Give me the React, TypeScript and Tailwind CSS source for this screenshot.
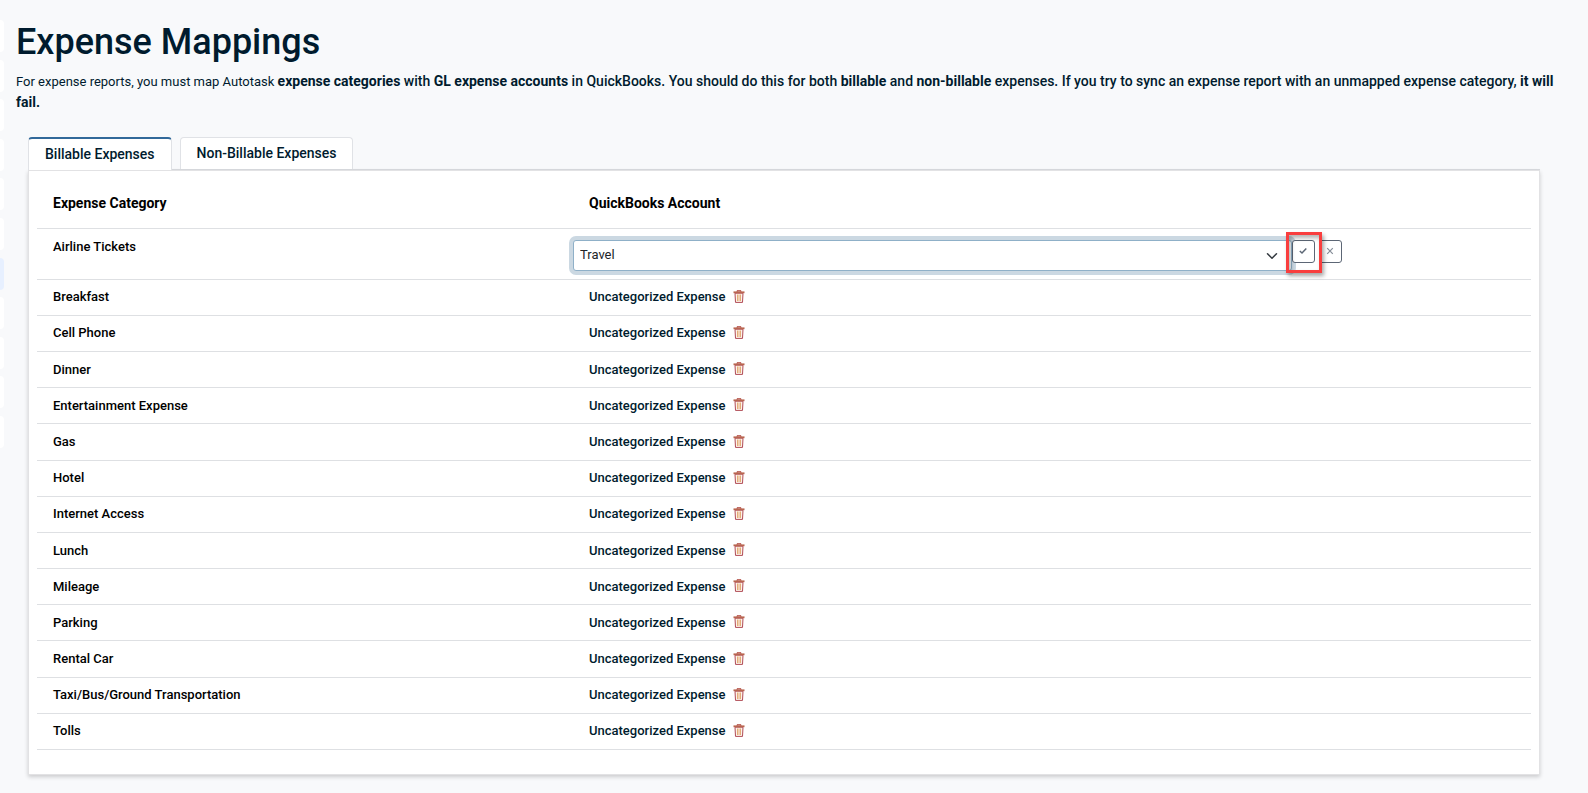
import { useState } from "react";
import clsx from "clsx";

const TABS = ["Billable Expenses", "Non-Billable Expenses"];

const CATEGORIES = [
  "Breakfast",
  "Cell Phone",
  "Dinner",
  "Entertainment Expense",
  "Gas",
  "Hotel",
  "Internet Access",
  "Lunch",
  "Mileage",
  "Parking",
  "Rental Car",
  "Taxi/Bus/Ground Transportation",
  "Tolls",
];

const NAV_ITEMS = 11;
const ACTIVE_NAV_ITEM = 6;

function TrashIcon() {
  return (
    <svg viewBox="0 0 12 13" className="h-[13px] w-3" fill="none">
      <path d="M2 3.2 2.5 12.4H9.5L10 3.2Z" fill="#fdf3ea" stroke="#b04a55" />
      <path d="M4.5 4.5v6.5M6 4.5v6.5M7.5 4.5v6.5" stroke="#dc9a5c" strokeWidth="0.8" />
      <path d="M0.5 2.3h11" stroke="#b9654f" strokeWidth="1.8" />
      <path d="M4 1.5V0.8h4v0.7" stroke="#a8352a" />
    </svg>
  );
}

function AccountEditor() {
  return (
    <div className="flex items-start">
      <div className="relative w-3/4">
        <select
          aria-label="QuickBooks account for Airline Tickets"
          defaultValue="Travel"
          className="block h-[31px] w-full appearance-none rounded-[3px] border border-[#8fb0c8] bg-white pr-8 pl-1.5 text-[13px] font-normal text-[#212529] ring-4 ring-[#cbd8e2] outline-none"
        >
          <option>Travel</option>
          <option>Uncategorized Expense</option>
        </select>
        <svg
          viewBox="0 0 16 16"
          className="pointer-events-none absolute top-2.5 right-3.5 size-3"
          fill="none"
          stroke="#343a40"
          strokeWidth="2"
          strokeLinecap="round"
          strokeLinejoin="round"
        >
          <path d="m2 5 6 6 6-6" />
        </svg>
      </div>
      <div className="relative z-10 flex gap-1">
        <button
          aria-label="Save"
          className="flex size-[23px] items-center justify-center rounded-[3px] border border-[#5c6675] bg-white"
        >
          <svg viewBox="0 0 8 8" className="size-2" fill="none" stroke="#5c6675" strokeWidth="1.5">
            <path d="M0.8 4 3 6 7.3 1.6" />
          </svg>
        </button>
        <button
          aria-label="Cancel"
          className="flex size-[23px] items-center justify-center rounded-[3px] border border-[#5c6675] bg-white"
        >
          <svg viewBox="0 0 8 8" className="size-2" fill="none" stroke="#858d98" strokeWidth="1.2">
            <path d="m1.2 1.2 5.6 5.6M6.8 1.2 1.2 6.8" />
          </svg>
        </button>
        {/* Highlight around the save button */}
        <span className="pointer-events-none absolute -top-2 -left-1.5 h-[41px] w-9 border-3 border-[#f93e3e] shadow-[2px_3px_4px_rgba(0,0,0,0.35),inset_2px_3px_4px_rgba(0,0,0,0.3)]" />
      </div>
    </div>
  );
}

export default function App() {
  const [tab, setTab] = useState(TABS[0]);

  return (
    <div className="flex min-h-screen bg-[#f8f9fb] font-[Roboto,sans-serif] font-medium text-[#001b2e]">
      {/* Edge of the collapsed side nav */}
      <nav className="mt-5 flex h-[428px] w-1 shrink-0 flex-col justify-between">
        {Array.from({ length: NAV_ITEMS }, (_, i) => (
          <div
            key={i}
            className={clsx("h-8 rounded-r-[4px]", i === ACTIVE_NAV_ITEM ? "bg-[#e7f0ff]" : "bg-white")}
          />
        ))}
      </nav>

      <main className="min-w-0 flex-1 pt-5 pr-8 pb-4 pl-3">
        <h1 className="text-[36px] leading-[45px]">Expense Mappings</h1>
        <p className="mt-1.5 text-sm leading-[21px]">
          <span className="text-[13px] font-normal">For expense reports, you must map Autotask </span>
          <b>expense categories</b> with <b>GL expense accounts</b> in QuickBooks. You should do this for both{" "}
          <b>billable</b> and <b>non-billable</b> expenses. If you try to sync an expense report with an unmapped
          expense category, <b>it will fail.</b>
        </p>

        <section className="mt-6 mr-4 ml-3">
          <div role="tablist" className="flex items-start gap-2 border-b border-[#dadce0]">
            {TABS.map((name) => (
              <button
                key={name}
                role="tab"
                aria-selected={tab === name}
                onClick={() => setTab(name)}
                className={clsx(
                  "rounded-t-[4px] border border-b-0 border-[#e0e2e6] bg-white px-4 text-sm leading-[31px]",
                  tab === name && "-mb-px border-t-2 border-t-[#32699a]"
                )}
              >
                {name}
              </button>
            ))}
          </div>

          <div className="border border-[#e2e2e4] bg-white px-2 pt-2 pb-6 shadow-[0_2px_4px_rgba(0,0,0,0.18)]">
            <table className="h-[571px] w-full table-fixed border-collapse text-left text-[13px] leading-5 text-black">
              <thead>
                <tr className="h-[49px] border-b border-[#dee0e3] text-sm font-bold">
                  <th className="w-[536px] px-4">Expense Category</th>
                  <th className="px-4">QuickBooks Account</th>
                </tr>
              </thead>
              <tbody>
                <tr className="h-[51px] border-b border-[#dee0e3] align-top">
                  <td className="px-4 pt-2">Airline Tickets</td>
                  <td className="pt-[11px]">
                    <AccountEditor />
                  </td>
                </tr>
                {CATEGORIES.map((category) => (
                  <tr key={category} className="h-9 border-b border-[#dee0e3]">
                    <td className="px-4">{category}</td>
                    <td className="px-4 text-[#001b2e]">
                      <div className="flex items-center gap-2">
                        Uncategorized Expense
                        <button aria-label={`Remove mapping for ${category}`} className="pb-0.5">
                          <TrashIcon />
                        </button>
                      </div>
                    </td>
                  </tr>
                ))}
              </tbody>
            </table>
          </div>
        </section>
      </main>
    </div>
  );
}
